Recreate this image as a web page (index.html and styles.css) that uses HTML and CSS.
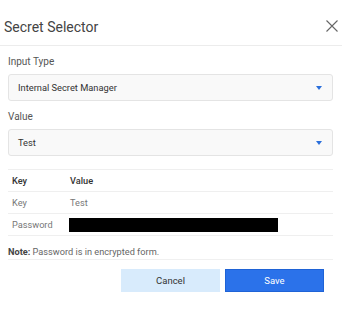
FILE: index.html
```html
<!DOCTYPE html>
<html lang="en">
<head>
    <meta charset="UTF-8">
    <meta name="viewport" content="width=device-width, initial-scale=1.0">
    <title>Secret Selector</title>
    <link rel="stylesheet" href="styles.css">
</head>
<body>
    <div class="dialog">
        <!-- Intestazione -->
        <div class="dialog-header">
            <span class="dialog-title">Secret Selector</span>
            <svg class="close-icon" width="12" height="12" viewBox="0 0 12 12">
                <path d="M0.5 0.5 L11.5 11.5 M11.5 0.5 L0.5 11.5" stroke="#666" stroke-width="1.1" fill="none"/>
            </svg>
        </div>

        <div class="dialog-body">
            <label class="field-label">Input Type</label>
            <div class="select-box">
                <span>Internal Secret Manager</span>
                <span class="arrow"></span>
            </div>

            <label class="field-label">Value</label>
            <div class="select-box">
                <span>Test</span>
                <span class="arrow"></span>
            </div>

            <table class="secret-table">
                <thead>
                    <tr>
                        <th>Key</th>
                        <th>Value</th>
                    </tr>
                </thead>
                <tbody>
                    <tr>
                        <td>Key</td>
                        <td>Test</td>
                    </tr>
                    <tr>
                        <td>Password</td>
                        <td><div class="masked"></div></td>
                    </tr>
                </tbody>
            </table>

            <p class="note"><b>Note:</b> Password is in encrypted form.</p>

            <div class="actions">
                <button class="btn btn-cancel">Cancel</button>
                <button class="btn btn-save">Save</button>
            </div>
        </div>
    </div>
</body>
</html>
```

FILE: styles.css
```css
body {
    font-family: Roboto, Arial, sans-serif;
    margin: 0;
    background: #fff;
    color: #333;
}
.dialog {
    width: 342px;
}
.dialog-header {
    display: flex;
    justify-content: space-between;
    align-items: center;
    height: 46px;
    padding: 8px 4px 0 4px;
    border-bottom: 1px solid #ececec;
    box-sizing: border-box;
}
.dialog-title {
    font-size: 14px;
    color: #444;
}
.close-icon {
    margin-top: -1px;
}
.dialog-body {
    padding: 0 9px 0 8px;
}
.field-label {
    display: block;
    font-size: 10px;
    color: #555;
    margin-top: 8px;
    height: 16px;
    line-height: 16px;
}
.select-box {
    display: flex;
    justify-content: space-between;
    align-items: center;
    height: 27px;
    box-sizing: border-box;
    margin-top: 4px;
    padding: 0 9px 0 9px;
    border: 1px solid #e4e4e4;
    border-radius: 3px;
    background: #f9f9f9;
    font-size: 9.3px;
    color: #333;
}
.arrow {
    width: 0;
    height: 0;
    border-left: 3px solid transparent;
    border-right: 3px solid transparent;
    border-top: 4px solid #2a6fdb;
    margin-right: 1px;
}
.secret-table {
    width: 100%;
    border-collapse: collapse;
    margin-top: 13px;
    border-top: 1px solid #efefef;
    font-size: 9.2px;
}
.secret-table th,
.secret-table td {
    text-align: left;
    border-bottom: 1px solid #efefef;
    height: 21px;
    padding: 0 0 0 4px;
}
.secret-table th {
    font-weight: 500;
    color: #333;
}
.secret-table td {
    color: #777;
}
.secret-table th:first-child,
.secret-table td:first-child {
    width: 54px;
}
.masked {
    width: 209px;
    height: 14px;
    background: #000;
    margin-left: -1px;
}
.note {
    font-size: 9.2px;
    color: #666;
    margin: 0;
    padding: 9px 0 0 0;
    line-height: 14px;
    border-bottom: 1px solid #f0f0f0;
}
.note b {
    color: #444;
    font-weight: 700;
}
.actions {
    display: flex;
    justify-content: flex-end;
    gap: 5px;
    margin-top: 9px;
}
.btn {
    width: 99px;
    height: 23px;
    border: none;
    font-family: Roboto, Arial, sans-serif;
    font-size: 9.5px;
    cursor: pointer;
}
.btn-cancel {
    background: #d8ebfc;
    color: #333;
}
.btn-save {
    background: #2b72ea;
    border: 1px solid #1f63d6;
    color: #fff;
    margin-right: 9px;
}
```
